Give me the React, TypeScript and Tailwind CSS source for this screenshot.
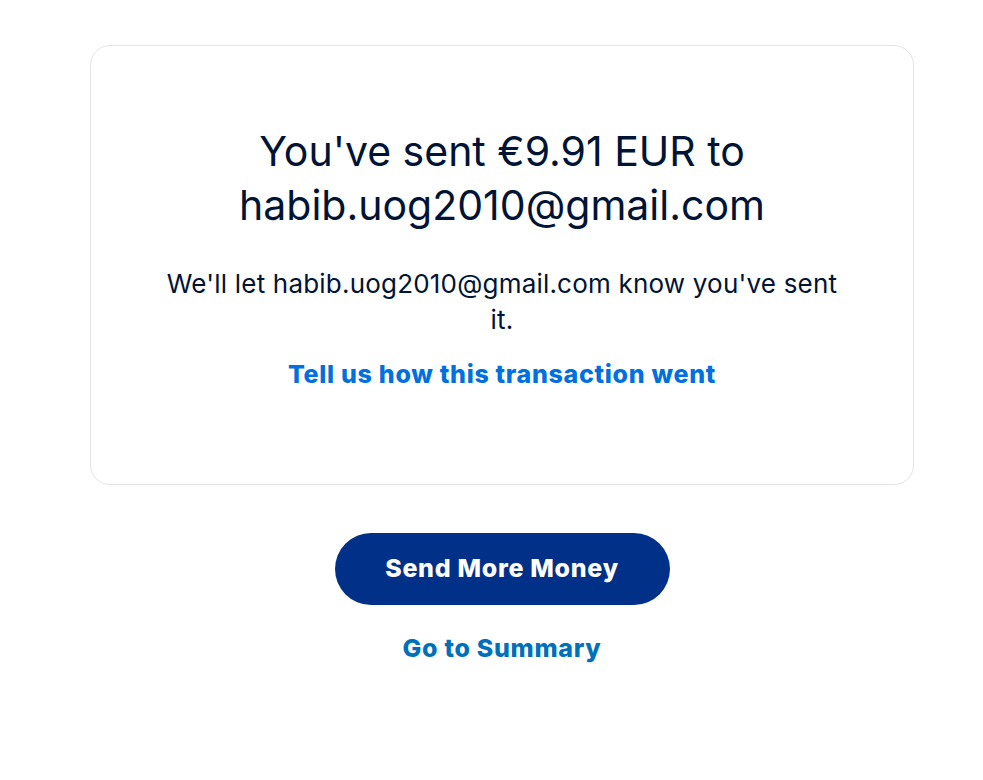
export default function App() {
  return (
    <div className="min-h-screen bg-white font-['Inter','Liberation_Sans',sans-serif]">
      <div className="ml-[90px] flex w-[824px] flex-col items-center pt-[45px]">
        <div className="flex w-full flex-col items-center rounded-[20px] border border-[#e5e5e5] px-[72px] pt-[78px] pb-[92px] text-center">
          <h1 className="max-w-[600px] text-[41px] leading-[54px] font-normal text-[#001435]">
            You've sent €9.91 EUR to habib.uog2010@gmail.com
          </h1>
          <p className="mt-[34px] max-w-[678px] text-[26px] leading-[36px] tracking-[0.2px] text-[#001435]">
            We'll let habib.uog2010@gmail.com know you've sent it.
          </p>
          <a href="#" className="mt-[18px] text-[25px] leading-[36px] font-extrabold tracking-[0.7px] text-[#0070e0]">
            Tell us how this transaction went
          </a>
        </div>
        <button className="mt-[48px] h-[72px] w-[335px] rounded-full bg-[#003087] text-[25px] font-extrabold tracking-[0.7px] text-white">
          Send More Money
        </button>
        <a href="#" className="mt-[25px] text-[25px] leading-[36px] font-extrabold tracking-[0.7px] text-[#0070ba]">
          Go to Summary
        </a>
      </div>
    </div>
  )
}
